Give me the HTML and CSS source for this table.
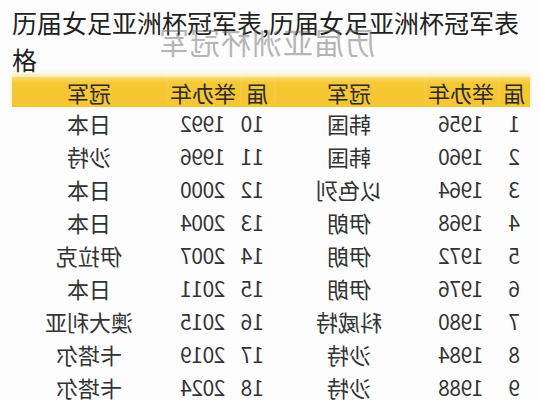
FILE: index.html
```html
<!DOCTYPE html>
<html lang="zh-CN">
<head>
<meta charset="utf-8">
<title>历届女足亚洲杯冠军表</title>
<link rel="stylesheet" href="styles.css">
</head>
<body>
<div class="page">
  <h1 class="title">历届女足亚洲杯冠军表,历届女足亚洲杯冠军表格</h1>
  <div class="watermark">历届亚洲杯冠军</div>
  <table class="champs">
    <colgroup>
      <col class="c-no"><col class="c-year"><col class="c-team">
      <col class="c-no2"><col class="c-year"><col class="c-team2">
    </colgroup>
    <thead>
      <tr><th>届</th><th>举办年</th><th>冠军</th><th>届</th><th>举办年</th><th>冠军</th></tr>
    </thead>
    <tbody>
      <tr><td class="no">1</td><td class="yr">1956</td><td>韩国</td><td class="no">10</td><td class="yr">1992</td><td>日本</td></tr>
      <tr><td class="no">2</td><td class="yr">1960</td><td>韩国</td><td class="no">11</td><td class="yr">1996</td><td>沙特</td></tr>
      <tr><td class="no">3</td><td class="yr">1964</td><td>以色列</td><td class="no">12</td><td class="yr">2000</td><td>日本</td></tr>
      <tr><td class="no">4</td><td class="yr">1968</td><td>伊朗</td><td class="no">13</td><td class="yr">2004</td><td>日本</td></tr>
      <tr><td class="no">5</td><td class="yr">1972</td><td>伊朗</td><td class="no">14</td><td class="yr">2007</td><td>伊拉克</td></tr>
      <tr><td class="no">6</td><td class="yr">1976</td><td>伊朗</td><td class="no">15</td><td class="yr">2011</td><td>日本</td></tr>
      <tr><td class="no">7</td><td class="yr">1980</td><td>科威特</td><td class="no">16</td><td class="yr">2015</td><td>澳大利亚</td></tr>
      <tr><td class="no">8</td><td class="yr">1984</td><td>沙特</td><td class="no">17</td><td class="yr">2019</td><td>卡塔尔</td></tr>
      <tr><td class="no">9</td><td class="yr">1988</td><td>沙特</td><td class="no">18</td><td class="yr">2024</td><td>卡塔尔</td></tr>
    </tbody>
  </table>
</div>
</body>
</html>
```

FILE: styles.css
```css
html, body {
  margin: 0;
  padding: 0;
  background: #fdfdfd;
}
body {
  width: 540px;
  height: 400px;
  overflow: hidden;
  font-family: "Noto Sans CJK SC", "Noto Sans", sans-serif;
  color: #222;
}
.page {
  position: relative;
  padding: 4px 0 0 12px;
}
.title {
  margin: 0;
  width: 516px;
  font-size: 25px;
  line-height: 37px;
  font-weight: normal;
  color: #222;
}
.watermark {
  position: absolute;
  left: 158px;
  top: 23px;
  font-size: 30px;
  line-height: 36px;
  letter-spacing: 1px;
  color: rgba(110, 110, 110, 0.5);
  transform: scaleX(-1);
  white-space: nowrap;
}
.champs {
  border-collapse: collapse;
  table-layout: fixed;
  width: 518px;
  margin-top: -1px;
  font-size: 22px;
  color: #333;
  transform: scaleX(-1);
}
.c-no { width: 32px; }
.c-year { width: 74px; }
.c-team { width: 150px; }
.c-no2 { width: 34px; }
.c-team2 { width: 154px; }
.champs th {
  height: 30px;
  padding: 0;
  font-weight: normal;
  line-height: 30px;
  text-align: center;
  color: #2a2a2a;
  background: linear-gradient(#f9db6a 0, #f6c833 6px, #f5c62e 100%);
  box-shadow: 0 -3px 4px rgba(248, 222, 130, 0.6);
}
.champs td {
  height: 33px;
  padding: 0;
  line-height: 33px;
  text-align: center;
  white-space: nowrap;
}
.champs td.yr {
  font-size: 21px;
  letter-spacing: -0.5px;
}
.champs td.no {
  text-align: left;
  padding-left: 10px;
  font-size: 21px;
}
```
